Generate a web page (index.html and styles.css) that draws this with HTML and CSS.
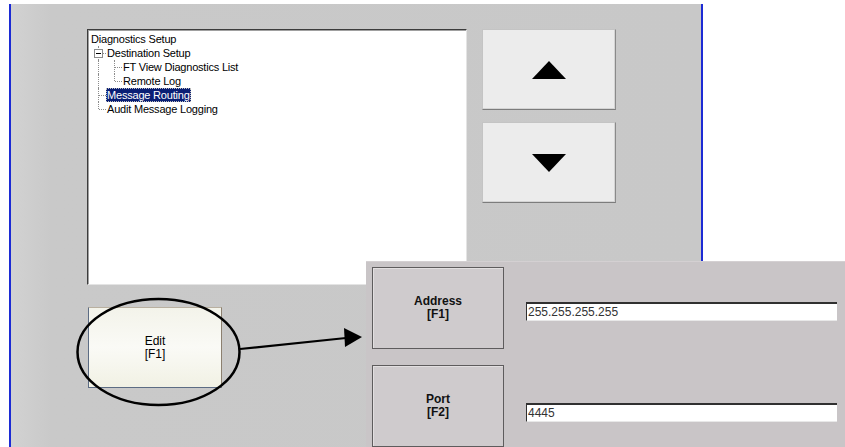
FILE: index.html
```html
<!DOCTYPE html>
<html lang="en">
<head>
    <meta charset="UTF-8">
    <meta name="viewport" content="width=device-width, initial-scale=1.0">
    <title>Message Routing</title>
    <link rel="stylesheet" href="styles.css">
</head>
<body>
    <!-- main terminal screen -->
    <div class="screen">
        <div class="screen-body">
            <!-- tree list -->
            <div class="tree-box">
                <div class="tree-row">
                    <span class="label">Diagnostics Setup</span>
                </div>
                <div class="tree-row">
                    <span class="col tee"><span class="expander"></span></span>
                    <span class="label">Destination Setup</span>
                </div>
                <div class="tree-row">
                    <span class="col pipe"></span>
                    <span class="col tee"></span>
                    <span class="label">FT View Diagnostics List</span>
                </div>
                <div class="tree-row">
                    <span class="col pipe"></span>
                    <span class="col elbow"></span>
                    <span class="label">Remote Log</span>
                </div>
                <div class="tree-row">
                    <span class="col tee"></span>
                    <span class="label selected">Message Routing</span>
                </div>
                <div class="tree-row">
                    <span class="col elbow"></span>
                    <span class="label">Audit Message Logging</span>
                </div>
            </div>

            <!-- scroll buttons -->
            <div class="scroll-buttons">
                <div class="key key-light">
                    <svg width="36" height="20" viewBox="0 0 36 20"><polygon points="18,1 35,19 1,19" fill="#000"/></svg>
                </div>
                <div class="key key-light">
                    <svg width="36" height="20" viewBox="0 0 36 20"><polygon points="1,1 35,1 18,19" fill="#000"/></svg>
                </div>
            </div>

            <div class="key key-edit">Edit<br>[F1]</div>
        </div>
    </div>

    <!-- second screen shown after pressing Edit -->
    <div class="popup">
        <div class="key key-dark">Address<br>[F1]</div>
        <div class="field field-address">255.255.255.255</div>
        <div class="key key-dark">Port<br>[F2]</div>
        <div class="field field-port">4445</div>
    </div>

    <!-- callout drawn over both screens -->
    <svg class="callout" width="845" height="447" viewBox="0 0 845 447">
        <ellipse cx="158.5" cy="352" rx="81" ry="53" fill="none" stroke="#000" stroke-width="2.5"/>
        <line x1="240" y1="349" x2="346" y2="338" stroke="#000" stroke-width="2.2"/>
        <polygon points="344,328 362,337 345,347" fill="#000"/>
    </svg>
</body>
</html>
```

FILE: styles.css
```css
*{
    margin: 0;
    padding: 0;
    box-sizing: border-box;
}

body{
    width: 845px;
    height: 447px;
    background-color: #fff;
    overflow: hidden;
    position: relative;
    font-family: "Liberation Sans", Arial, sans-serif;
    font-size: 11px;
    color: #000;
}

/* main screen */
.screen{
    width: 694px;
    height: 443px;
    margin: 4px 0 0 9px;
    border-left: 2px solid #1c2bd4;
    border-right: 2px solid #1c2bd4;
    background: linear-gradient(to right, #d2d2d2 0, #c9c9c9 40px, #c8c8c8 100%);
}

.screen-body{
    display: grid;
    grid-template-columns: 380px 134px;
    column-gap: 15px;
    row-gap: 22px;
    padding: 25px 0 0 76px;
}

/* tree list */
.tree-box{
    height: 256px;
    background-color: #fff;
    border: 1px solid;
    border-color: #3c3c3c #e4e4e4 #e4e4e4 #3c3c3c;
    box-shadow: inset 1px 1px 0 #a0a0a0;
    padding: 2px 0 0 2px;
}

.tree-row{
    height: 14px;
    display: flex;
    align-items: center;
    line-height: 14px;
    white-space: nowrap;
    letter-spacing: -0.2px;
}

.col{
    position: relative;
    width: 16px;
    height: 14px;
    flex: none;
}

/* dotted connectors */
.col::before,
.col::after{
    content: "";
    position: absolute;
    border-color: #8c8c8c;
    border-style: dotted;
    border-width: 0;
}
.pipe::before,
.tee::before{
    left: 8px;
    top: 0;
    bottom: 0;
    border-left-width: 1px;
}
.elbow::before{
    left: 8px;
    top: 0;
    height: 7px;
    border-left-width: 1px;
}
.tee::after,
.elbow::after{
    left: 9px;
    right: 0;
    top: 7px;
    border-top-width: 1px;
}

.expander{
    position: absolute;
    left: 4px;
    top: 3px;
    width: 9px;
    height: 9px;
    background-color: #fff;
    border: 1px solid #8c8c8c;
    z-index: 1;
}
.expander::after{
    content: "";
    position: absolute;
    left: 1px;
    top: 3px;
    width: 5px;
    border-top: 1px solid #000;
}

.label{
    padding: 0 1px;
}

.selected{
    background-color: #0a1f75;
    color: #fff;
    outline: 1px dotted #c0c0c0;
    outline-offset: -1px;
}

/* keys */
.key{
    display: flex;
    align-items: center;
    justify-content: center;
    text-align: center;
    line-height: 13px;
    font-size: 12px;
}

.scroll-buttons{
    display: flex;
    flex-direction: column;
    gap: 12px;
}

.key-light{
    height: 81px;
    background-color: #ececec;
    border: 1px solid;
    border-color: #c4c4c4 #8a8a8a #7c7c7c #c4c4c4;
    box-shadow: inset -1px -1px 0 #d4d4d4;
}

.key-edit{
    width: 134px;
    height: 81px;
    margin-left: 1px;
    background: linear-gradient(#f3f3ea, #fafaf6 50%, #f1f1e4);
    border: 1px solid;
    border-color: #b9b0a0 #8c8070 #5c6c84 #5c6c84;
}

/* popup screen */
.popup{
    position: absolute;
    left: 366px;
    top: 261px;
    right: 0;
    bottom: 0;
    background-color: #c9c5c7;
    border-top: 1px solid #d4d0d2;
    display: grid;
    grid-template-columns: 132px 311px;
    grid-template-rows: 82px 82px;
    column-gap: 22px;
    row-gap: 16px;
    padding: 5px 0 0 6px;
}

.key-dark{
    background-color: #cfcbcd;
    border: 1px solid #5e5c5d;
    box-shadow: inset 1px 1px 0 #e2dfe0;
    font-weight: bold;
    color: #111;
}

.field{
    height: 19px;
    background-color: #fff;
    border-top: 2px solid #303030;
    border-left: 1px solid #303030;
    border-bottom: 1px solid #e8e8e8;
    padding-left: 1px;
    line-height: 16px;
    font-size: 12px;
    color: #333;
}
.field-address{
    margin-top: 35px;
}
.field-port{
    margin-top: 38px;
}

/* annotation */
.callout{
    position: absolute;
    left: 0;
    top: 0;
    pointer-events: none;
}
```
